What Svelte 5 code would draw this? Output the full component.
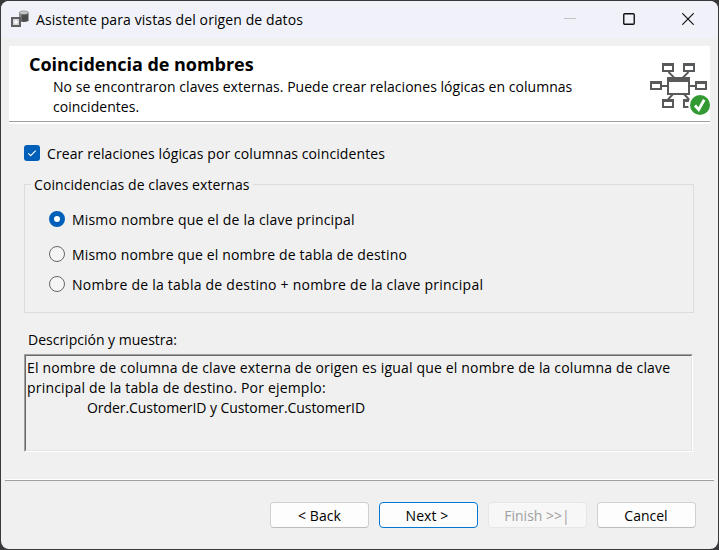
<script>
  let matching = $state(true);
  let selected = $state(0);
  const options = [
    'Mismo nombre que el de la clave principal',
    'Mismo nombre que el nombre de tabla de destino',
    'Nombre de la tabla de destino + nombre de la clave principal'
  ];
</script>

<div class="desktop">
  <main class="window">
    <header class="titlebar">
      <svg class="app-icon" width="19" height="19" viewBox="0 0 19 19">
        <path d="M8 2.5v8.5q5 2.2 9.5 0V2.5z" fill="#4c4c4c" />
        <path d="M8 3v8l2.5 1V3z" fill="#8a8a8a" />
        <ellipse cx="12.8" cy="2.7" rx="4.6" ry="1.7" fill="#ccc" stroke="#777" stroke-width=".7" />
        <path d="M1 8h8v8H1z" fill="#c4c4c4" stroke="#606060" stroke-width="2" />
        <path d="M2.5 12h5M5 9.5v5" stroke="#fff" stroke-width="1.6" />
        <path d="M2.5 9.5h1v1h-1zM6.5 9.5h1v1h-1zM2.5 13.5h1v1h-1zM6.5 13.5h1v1h-1z" fill="#fff" />
      </svg>
      <span class="title">Asistente para vistas del origen de datos</span>
      <div class="controls">
        <svg width="12" height="12"><path d="M0 5.5h12" stroke="#c2c3c8" /></svg>
        <svg width="12" height="12"><rect x=".75" y=".75" width="10.5" height="10.5" rx="1" fill="none" stroke="#111" stroke-width="1.4" /></svg>
        <svg width="12" height="12"><path d="M.3.3l11.4 11.4M11.7.3L.3 11.7" stroke="#111" stroke-width="1.2" /></svg>
      </div>
    </header>

    <section class="banner">
      <div class="copy">
        <h1>Coincidencia de nombres</h1>
        <p>No se encontraron claves externas. Puede crear relaciones lógicas en columnas</p>
        <p>coincidentes.</p>
      </div>
      <svg class="schema" width="60" height="53" viewBox="0 0 60 53">
        <path d="M18.5 10l6 6M38.5 10l-6 6M12 24h6M39 24h7M24 31l-6 6.5M33 31l6 6.5" fill="none" stroke="#58595b" stroke-width="1.9" />
        <g fill="#fff" stroke="#58595b" stroke-width="2">
          <path d="M13 2h10v7H13zM34 2h10v7H34zM1 20h10v7H1zM46 20h10v7H46zM13 38h10v7H13zM34 38h10v7H34z" />
          <path d="M18 16h21v16H18z" />
        </g>
        <path d="M17 15h23v5H17zM12 1h12v3H12zM33 1h12v3H33zM0 19h12v3H0zM45 19h12v3H45zM12 37h12v3H12zM33 37h12v3H33z" fill="#58595b" />
        <circle cx="50" cy="43" r="11.8" fill="#fff" />
        <circle cx="50" cy="43" r="10" fill="#339933" />
        <path d="M45 43.5l3.7 4.2L54.2 37.8" fill="none" stroke="#fff" stroke-width="2.8" />
      </svg>
    </section>

    <div class="content">
      <label class="check">
        <input type="checkbox" bind:checked={matching} />
        <span class="box">
          {#if matching}<svg width="16" height="16"><path d="M4.3 8.3l2.4 2.4 5-5" fill="none" stroke="#fff" stroke-width="1.1" /></svg>{/if}
        </span>
        <span class="check-text">Crear relaciones lógicas por columnas coincidentes</span>
      </label>

      <div class="group">
        <div class="legend"><i></i><span>Coincidencias de claves externas</span><b></b></div>
        <div class="options">
          {#each options as option, i}
            <label class="radio r{i}">
              <input type="radio" name="match" value={i} bind:group={selected} />
              <span class="dot" class:on={selected === i}></span>
              <span class="radio-text">{option}</span>
            </label>
          {/each}
        </div>
      </div>

      <div class="caption">Descripción y muestra:</div>
      <div class="sample"><div class="sample-inner">
        <p class="s1">El nombre de columna de clave externa de origen es igual que el nombre de la columna de clave</p>
        <p class="s2">principal de la tabla de destino. Por ejemplo:</p>
        <p class="s3">Order.CustomerID y Customer.CustomerID</p>
      </div></div>
    </div>

    <footer>
      <button class="back">&lt; Back</button>
      <button class="next">Next &gt;</button>
      <button class="finish" disabled>Finish &gt;&gt;|</button>
      <button class="cancel">Cancel</button>
    </footer>
  </main>
</div>

<style>
  .desktop { box-sizing: border-box; width: 719px; height: 550px; padding: 1px; background: #39383b; font: 14px/20px "Open Sans", "Noto Sans", sans-serif; color: #000; white-space: nowrap; }
  .window { display: flex; flex-direction: column; width: 717px; height: 548px; background: #f0f0f0; border-radius: 8px; overflow: hidden; }
  p, h1 { margin: 0; }
  svg { display: block; }
  .titlebar { display: flex; align-items: center; height: 37px; background: #f1f2f9; flex: none; }
  .title { letter-spacing: .1px; }
  .app-icon { margin: 0 6px 0 10px; }
  .controls { display: flex; gap: 47px; margin: -1px 24px 0 auto; }
  .banner { box-sizing: border-box; display: flex; justify-content: space-between; flex: none; width: 701px; height: 78px; margin: 8px 0 0 8px; background: linear-gradient(#a0a0a0, #a0a0a0) 0 75px / 100% 1px no-repeat #fff; }
  .copy { padding: 6px 0 0 20px; }
  h1 { font-size: 18px; line-height: 25px; font-weight: 700; letter-spacing: -.03px; }
  .copy p { padding-left: 24px; letter-spacing: .03px; }
  .schema { margin-top: 16px; }
  .content { padding: 19px 0 0 23px; height: 355px; box-sizing: border-box; flex: none; }
  label { display: flex; align-items: center; height: 20px; }
  input { position: absolute; opacity: 0; pointer-events: none; }
  .box { width: 16px; height: 16px; border-radius: 3px; background: #005fb8; margin-right: 7px; }
  .check-text { padding-top: 2px; letter-spacing: .1px; }
  .group { box-sizing: border-box; width: 670px; height: 129px; margin-top: 21px; border: 1px solid #dcdcdc; border-top: 0; }
  .legend { display: flex; align-items: flex-start; height: 11px; margin: 0 -1px; }
  .legend i { width: 7px; border-top: 1px solid #dcdcdc; margin-right: 3px; }
  .legend b { flex: 1; border-top: 1px solid #dcdcdc; margin-left: 3px; }
  .legend span { margin-top: -9px; letter-spacing: .08px; }
  .options { padding: 14px 0 0 24px; }
  .radio-text { padding-top: 2px; }
  .r0 { margin-bottom: 15px; letter-spacing: .18px; }
  .r1 { margin-bottom: 10px; letter-spacing: .15px; }
  .r2 { letter-spacing: .24px; }
  .dot { box-sizing: border-box; width: 16px; height: 16px; border: 1px solid #666; border-radius: 50%; background: #f5f5f5; margin-right: 7px; }
  .dot.on { border: 5px solid #005fb8; background: #fff; }
  .caption { padding: 17px 0 0 4px; }
  .sample { box-sizing: border-box; width: 669px; height: 98px; margin-top: 4px; border: 1px solid; border-color: #a0a0a0 #fff #fff #a0a0a0; }
  .sample-inner { box-sizing: border-box; height: 96px; padding: 2px 1px; border: 1px solid; border-color: #696969 #e3e3e3 #e3e3e3 #696969; }
  .s1 { letter-spacing: .173px; }
  .s2 { letter-spacing: .19px; }
  .s3 { padding-left: 60px; letter-spacing: -.07px; }
  footer { flex: 1; display: flex; justify-content: flex-end; align-items: flex-start; gap: 10px; margin: 1px 4px 0; padding: 21px 18px 0 0; border-top: 1px solid #a0a0a0; box-shadow: 0 -1px #fff; }
  button { box-sizing: border-box; width: 99px; height: 26px; padding: 1px 1px 0 0; border: 1px solid #d0d0d0; border-bottom-color: #bcbcbc; border-radius: 4px; background: #fdfdfd; color: #000; font: inherit; }
  .next { border-color: #0078d4; padding-right: 3px; letter-spacing: .1px; }
  .back { padding-right: 0; letter-spacing: .1px; }
  .finish { color: #a0a0a0; background: #f7f7f7; border-color: #e6e6e6; }
</style>
